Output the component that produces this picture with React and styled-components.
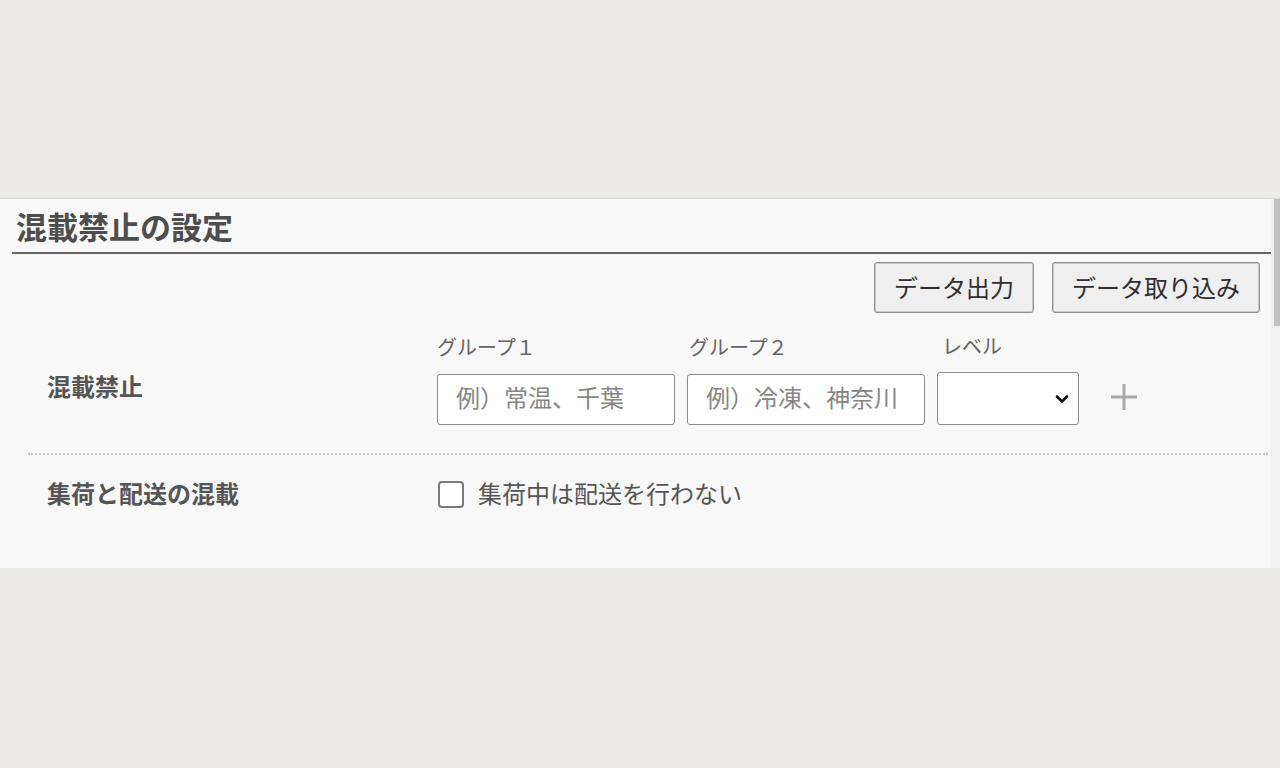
import React from "react";
import styled, { createGlobalStyle } from "styled-components";

const GlobalStyle = createGlobalStyle`
  body {
    margin: 0;
    background: #edebe7;
    font-family: "Noto Sans CJK JP", "Noto Sans", sans-serif;
    color: #4d4d4d;
  }
`;

const Page = styled.div`
  padding-top: 198px;
  height: 570px;
`;

const Panel = styled.div`
  display: flex;
  height: 370px;
  background: #f8f8f8;
  border-top: 1px solid #d9d9d9;
  box-sizing: border-box;
  overflow: hidden;
`;

const Content = styled.div`
  flex: 1;
  min-width: 0;
  padding-left: 12px;
`;

const ScrollTrack = styled.div`
  width: 9px;
  flex-shrink: 0;
  background: #f0f0f0;
`;

const ScrollThumb = styled.div`
  height: 127px;
  margin-left: 3px;
  background: #c1c1c1;
`;

const Title = styled.h2`
  margin: 0;
  height: 53px;
  line-height: 53px;
  padding-left: 4px;
  font-size: 31px;
  font-weight: 700;
  color: #4d4d4d;
  border-bottom: 2px solid #666;
`;

const Toolbar = styled.div`
  display: flex;
  justify-content: flex-end;
  gap: 18px;
  padding: 8px 11px 0 0;
`;

const Button = styled.button`
  height: 51px;
  padding: 0 19px 2px;
  font-family: inherit;
  font-size: 24px;
  color: #2e2e2e;
  background: #efefef;
  border: 1px solid #8f8f8f;
  border-radius: 3px;
  box-shadow: inset 0 0 0 1px #c8c8c8;
`;

const Section = styled.div`
  margin: 0 3px 0 16px;
`;

const Row = styled.div`
  display: grid;
  grid-template-columns: 409px 1fr;
  align-items: center;
  padding: ${(p) => p.$pad};
  border-bottom: ${(p) => (p.$divider ? "2px dotted #c4c4c4" : "none")};
`;

const RowLabel = styled.div`
  padding-left: 19px;
  padding-top: ${(p) => p.$offset || 0}px;
  font-size: 24px;
  font-weight: 700;
  color: #555;
`;

const Fields = styled.div`
  display: flex;
  align-items: flex-end;
  gap: 12px;
`;

const FieldGroup = styled.div`
  display: flex;
  flex-direction: column;
  gap: 14px;
  width: ${(p) => p.$width}px;
`;

const FieldLabel = styled.div`
  height: 26px;
  line-height: 26px;
  padding-left: ${(p) => p.$indent || 0}px;
  font-size: 20px;
  color: #636363;
`;

const TextInput = styled.input`
  box-sizing: border-box;
  width: 100%;
  height: 51px;
  padding: 0 18px 7px;
  font-family: inherit;
  font-size: 24px;
  color: #333;
  background: #fff;
  border: 1px solid #8a8a8a;
  border-radius: 3px;
  outline: none;

  &::placeholder {
    color: #858585;
  }
`;

const SelectWrap = styled.div`
  position: relative;
  height: 53px;
  margin-top: -1px;
`;

const Select = styled.select`
  box-sizing: border-box;
  width: 100%;
  height: 100%;
  appearance: none;
  background: #fff;
  border: 1px solid #8a8a8a;
  border-radius: 3px;
  font-family: inherit;
  font-size: 22px;
`;

const Chevron = styled.svg`
  position: absolute;
  right: 10px;
  top: 22px;
  pointer-events: none;
`;

const AddButton = styled.button`
  display: flex;
  align-items: center;
  justify-content: center;
  width: 40px;
  height: 51px;
  margin: 0 0 3px 13px;
  padding: 0;
  background: none;
  border: none;
`;

const CheckLabel = styled.label`
  display: flex;
  align-items: center;
  gap: 14px;
  margin-left: 1px;
  font-size: 24px;
  color: #555;
`;

const Box = styled.span`
  box-sizing: border-box;
  width: 26px;
  height: 27px;
  margin-top: 3px;
  background: #fff;
  border: 2px solid #7a7a7a;
  border-radius: 4px;
`;

export default function App() {
  return (
    <>
      <GlobalStyle />
      <Page>
        <Panel>
          <Content>
            <Title>混載禁止の設定</Title>
            <Toolbar>
              <Button>データ出力</Button>
              <Button>データ取り込み</Button>
            </Toolbar>
            <Section>
              <Row $pad="20px 0 28px" $divider>
                <RowLabel $offset={12}>混載禁止</RowLabel>
                <Fields>
                  <FieldGroup $width={238}>
                    <FieldLabel>グループ１</FieldLabel>
                    <TextInput placeholder="例）常温、千葉" />
                  </FieldGroup>
                  <FieldGroup $width={238}>
                    <FieldLabel $indent={2}>グループ２</FieldLabel>
                    <TextInput placeholder="例）冷凍、神奈川" />
                  </FieldGroup>
                  <FieldGroup $width={142}>
                    <FieldLabel $indent={5}>レベル</FieldLabel>
                    <SelectWrap>
                      <Select defaultValue="">
                        <option value=""></option>
                      </Select>
                      <Chevron width="14" height="10" viewBox="0 0 14 10">
                        <path
                          d="M2 2.5 L7 7.5 L12 2.5"
                          fill="none"
                          stroke="#111"
                          strokeWidth="2.6"
                          strokeLinecap="round"
                          strokeLinejoin="round"
                        />
                      </Chevron>
                    </SelectWrap>
                  </FieldGroup>
                  <AddButton aria-label="追加">
                    <svg width="28" height="28" viewBox="0 0 28 28">
                      <path
                        d="M14 1 V27 M1 14 H27"
                        stroke="#a8a8a8"
                        strokeWidth="3"
                      />
                    </svg>
                  </AddButton>
                </Fields>
              </Row>
              <Row $pad="20px 0 30px">
                <RowLabel>集荷と配送の混載</RowLabel>
                <CheckLabel>
                  <Box />
                  集荷中は配送を行わない
                </CheckLabel>
              </Row>
            </Section>
          </Content>
          <ScrollTrack>
            <ScrollThumb />
          </ScrollTrack>
        </Panel>
      </Page>
    </>
  );
}
